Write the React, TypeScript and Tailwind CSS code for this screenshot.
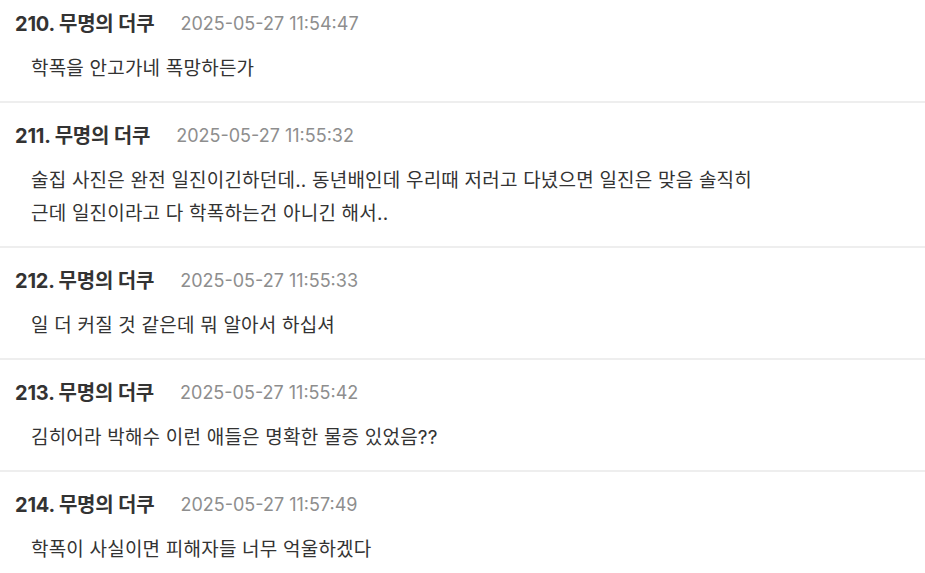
import React from "react";

const comments: { no: number; time: string; lines: string[] }[] = [
  { no: 210, time: "2025-05-27 11:54:47", lines: ["학폭을 안고가네 폭망하든가"] },
  {
    no: 211,
    time: "2025-05-27 11:55:32",
    lines: [
      "술집 사진은 완전 일진이긴하던데.. 동년배인데 우리때 저러고 다녔으면 일진은 맞음 솔직히",
      "근데 일진이라고 다 학폭하는건 아니긴 해서..",
    ],
  },
  { no: 212, time: "2025-05-27 11:55:33", lines: ["일 더 커질 것 같은데 뭐 알아서 하십셔"] },
  { no: 213, time: "2025-05-27 11:55:42", lines: ["김히어라 박해수 이런 애들은 명확한 물증 있었음??"] },
  { no: 214, time: "2025-05-27 11:57:49", lines: ["학폭이 사실이면 피해자들 너무 억울하겠다"] },
];

export default function App() {
  return (
    <div
      className="w-[925px] h-[573px] overflow-hidden bg-white"
      style={{ fontFamily: 'Inter, "Noto Sans CJK KR", sans-serif' }}
    >
      <div className="-mt-[9px]">
        {comments.map((c) => (
          <div key={c.no} className="border-b-2 border-[#eeeeee] pt-[21px] pb-[16px]">
            <div className="flex items-center px-[15px] h-[24px] leading-[24px]">
              <span className="text-[20px] font-bold text-[#333333] tracking-[-0.2px]">
                {c.no}. 무명의 더쿠
              </span>
              <span className="ml-[26px] text-[18px] text-[#8e8e8e]">{c.time}</span>
            </div>
            <div className="mt-[16px] pl-[31px] text-[19px] leading-[33px] tracking-[0.2px] text-[#333333]">
              {c.lines.map((l, i) => (
                <div key={i}>{l}</div>
              ))}
            </div>
          </div>
        ))}
      </div>
    </div>
  );
}
